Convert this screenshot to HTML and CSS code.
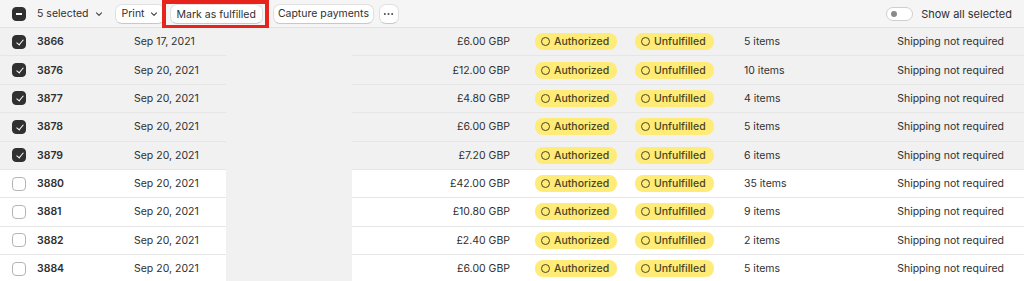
FILE: index.html
```html
<!DOCTYPE html>
<html lang="en">
<head>
    <meta charset="UTF-8">
    <meta name="viewport" content="width=device-width, initial-scale=1.0">
    <title>Orders</title>
    <link rel="stylesheet" href="styles.css">
</head>
<body>
    <div class="orders">
        <div class="bulk-bar">
            <span class="check check-minus"></span>
            <span class="selected-count">5 selected
                <svg class="chev" viewBox="0 0 10 10"><path d="M2.5 3.8 5 6.3 7.5 3.8" /></svg>
            </span>
            <button class="btn btn-print">Print
                <svg class="chev" viewBox="0 0 10 10"><path d="M2.5 3.8 5 6.3 7.5 3.8" /></svg>
            </button>
            <span class="highlight"><button class="btn">Mark as fulfilled</button></span>
            <button class="btn btn-capture">Capture payments</button>
            <button class="btn btn-icon">
                <svg viewBox="0 0 12 4"><circle cx="2" cy="2" r="1.1" /><circle cx="6" cy="2" r="1.1" /><circle cx="10" cy="2" r="1.1" /></svg>
            </button>
            <span class="show-all">
                <span class="toggle"></span>
                Show all selected
            </span>
        </div>

        <div class="row selected">
            <span class="check checked"></span><span class="num">3866</span><span>Sep 17, 2021</span><span class="redact"></span>
            <span class="amount">£6.00 GBP</span><span class="cell"><span class="badge">Authorized</span></span><span class="cell"><span class="badge">Unfulfilled</span></span>
            <span>5 items</span><span class="ship">Shipping not required</span>
        </div>
        <div class="row selected">
            <span class="check checked"></span><span class="num">3876</span><span>Sep 20, 2021</span><span class="redact"></span>
            <span class="amount">£12.00 GBP</span><span class="cell"><span class="badge">Authorized</span></span><span class="cell"><span class="badge">Unfulfilled</span></span>
            <span>10 items</span><span class="ship">Shipping not required</span>
        </div>
        <div class="row selected">
            <span class="check checked"></span><span class="num">3877</span><span>Sep 20, 2021</span><span class="redact"></span>
            <span class="amount">£4.80 GBP</span><span class="cell"><span class="badge">Authorized</span></span><span class="cell"><span class="badge">Unfulfilled</span></span>
            <span>4 items</span><span class="ship">Shipping not required</span>
        </div>
        <div class="row selected">
            <span class="check checked"></span><span class="num">3878</span><span>Sep 20, 2021</span><span class="redact"></span>
            <span class="amount">£6.00 GBP</span><span class="cell"><span class="badge">Authorized</span></span><span class="cell"><span class="badge">Unfulfilled</span></span>
            <span>5 items</span><span class="ship">Shipping not required</span>
        </div>
        <div class="row selected">
            <span class="check checked"></span><span class="num">3879</span><span>Sep 20, 2021</span><span class="redact"></span>
            <span class="amount">£7.20 GBP</span><span class="cell"><span class="badge">Authorized</span></span><span class="cell"><span class="badge">Unfulfilled</span></span>
            <span>6 items</span><span class="ship">Shipping not required</span>
        </div>
        <div class="row">
            <span class="check"></span><span class="num">3880</span><span>Sep 20, 2021</span><span class="redact"></span>
            <span class="amount">£42.00 GBP</span><span class="cell"><span class="badge">Authorized</span></span><span class="cell"><span class="badge">Unfulfilled</span></span>
            <span>35 items</span><span class="ship">Shipping not required</span>
        </div>
        <div class="row">
            <span class="check"></span><span class="num">3881</span><span>Sep 20, 2021</span><span class="redact"></span>
            <span class="amount">£10.80 GBP</span><span class="cell"><span class="badge">Authorized</span></span><span class="cell"><span class="badge">Unfulfilled</span></span>
            <span>9 items</span><span class="ship">Shipping not required</span>
        </div>
        <div class="row">
            <span class="check"></span><span class="num">3882</span><span>Sep 20, 2021</span><span class="redact"></span>
            <span class="amount">£2.40 GBP</span><span class="cell"><span class="badge">Authorized</span></span><span class="cell"><span class="badge">Unfulfilled</span></span>
            <span>2 items</span><span class="ship">Shipping not required</span>
        </div>
        <div class="row">
            <span class="check"></span><span class="num">3884</span><span>Sep 20, 2021</span><span class="redact"></span>
            <span class="amount">£6.00 GBP</span><span class="cell"><span class="badge">Authorized</span></span><span class="cell"><span class="badge">Unfulfilled</span></span>
            <span>5 items</span><span class="ship">Shipping not required</span>
        </div>
    </div>
</body>
</html>
```

FILE: styles.css
```css
* { margin: 0; padding: 0; box-sizing: border-box; }

body {
    font-family: Inter, 'Noto Sans', sans-serif;
    font-size: 10.5px;
    color: #303030;
    background: #fff;
}

.orders {
    width: 1024px;
}

/* bulk action bar */
.bulk-bar {
    height: 28px;
    display: flex;
    align-items: center;
    padding-left: 12px;
    background: #f5f5f5;
    border-bottom: 1px solid #e3e3e3;
}

.selected-count {
    display: flex;
    align-items: center;
    gap: 5px;
    margin-left: 11px;
    margin-right: 11px;
}

.chev {
    width: 10px;
    height: 10px;
    fill: none;
    stroke: #4a4a4a;
    stroke-width: 1.2;
    stroke-linecap: round;
    stroke-linejoin: round;
}

.btn {
    font: inherit;
    color: #303030;
    height: 20px;
    padding: 0 6px;
    display: inline-flex;
    align-items: center;
    gap: 3px;
    background: #fff;
    border: 1px solid #e0e0e0;
    border-bottom-color: #c8c8c8;
    border-radius: 7px;
    margin-right: 5px;
}

.btn-print {
    padding: 0 5px 0 6px;
    gap: 4px;
}

.highlight {
    display: inline-flex;
    align-items: center;
    height: 28px;
    margin-left: -8px;
    margin-right: 4px;
    padding: 0 2px 0 4px;
    border: 4px solid #e8231b;
    border-bottom-width: 3px;
}

.highlight .btn {
    margin-right: 0;
    padding: 0 6px;
}

.btn-capture {
    padding: 0 4px;
}

.btn-icon {
    width: 20px;
    padding: 0;
    justify-content: center;
}

.btn-icon svg {
    width: 11px;
    height: 4px;
    fill: #4a4a4a;
}

.show-all {
    margin-left: auto;
    margin-right: 12px;
    display: flex;
    align-items: center;
    gap: 8px;
    font-size: 11px;
}

.toggle {
    position: relative;
    width: 27px;
    height: 14px;
    border-radius: 7px;
    background: #fff;
    border: 1px solid #cfcfcf;
}

.toggle::after {
    content: "";
    position: absolute;
    left: 4px;
    top: 3px;
    width: 6px;
    height: 6px;
    border-radius: 50%;
    background: #8a8a8a;
}

/* checkboxes */
.check {
    width: 14px;
    height: 14px;
    border-radius: 4px;
    border: 1px solid #b5b5b5;
    background: #fff;
    position: relative;
}

.checked, .check-minus {
    background: #303030;
    border-color: #303030;
}

.checked::after {
    content: "";
    position: absolute;
    left: 4.5px;
    top: 2px;
    width: 3px;
    height: 6px;
    border: solid #fff;
    border-width: 0 1.5px 1.5px 0;
    transform: rotate(40deg);
}

.check-minus::after {
    content: "";
    position: absolute;
    left: 3px;
    top: 5.5px;
    width: 6px;
    height: 1.5px;
    background: #fff;
}

/* table rows */
.row {
    height: 28.375px;
    display: grid;
    grid-template-columns: 14px 108px 92px 126px 158px 125px 109px 1fr auto;
    align-items: center;
    padding: 0 20px 0 12px;
    border-bottom: 1px solid #e6e6e6;
    background: #fff;
}

.row.selected {
    background: #f1f1f1;
}

.num {
    padding-left: 11px;
    font-weight: 600;
}

.redact {
    align-self: stretch;
    margin-bottom: -1px;
    background: #f1f1f1;
}

.amount {
    text-align: right;
}

.cell {
    padding-left: 25px;
}

.cell + .cell {
    padding-left: 0;
}

.badge {
    display: inline-flex;
    align-items: center;
    gap: 4px;
    height: 17px;
    padding: 0 8px 0 6px;
    border-radius: 8px;
    background: #ffeb78;
    color: #4a4520;
    font-weight: 500;
}

.badge::before {
    content: "";
    width: 7px;
    height: 7px;
    border-radius: 50%;
    border: 1.3px solid #4a4520;
}

.ship {
    text-align: right;
}
```
